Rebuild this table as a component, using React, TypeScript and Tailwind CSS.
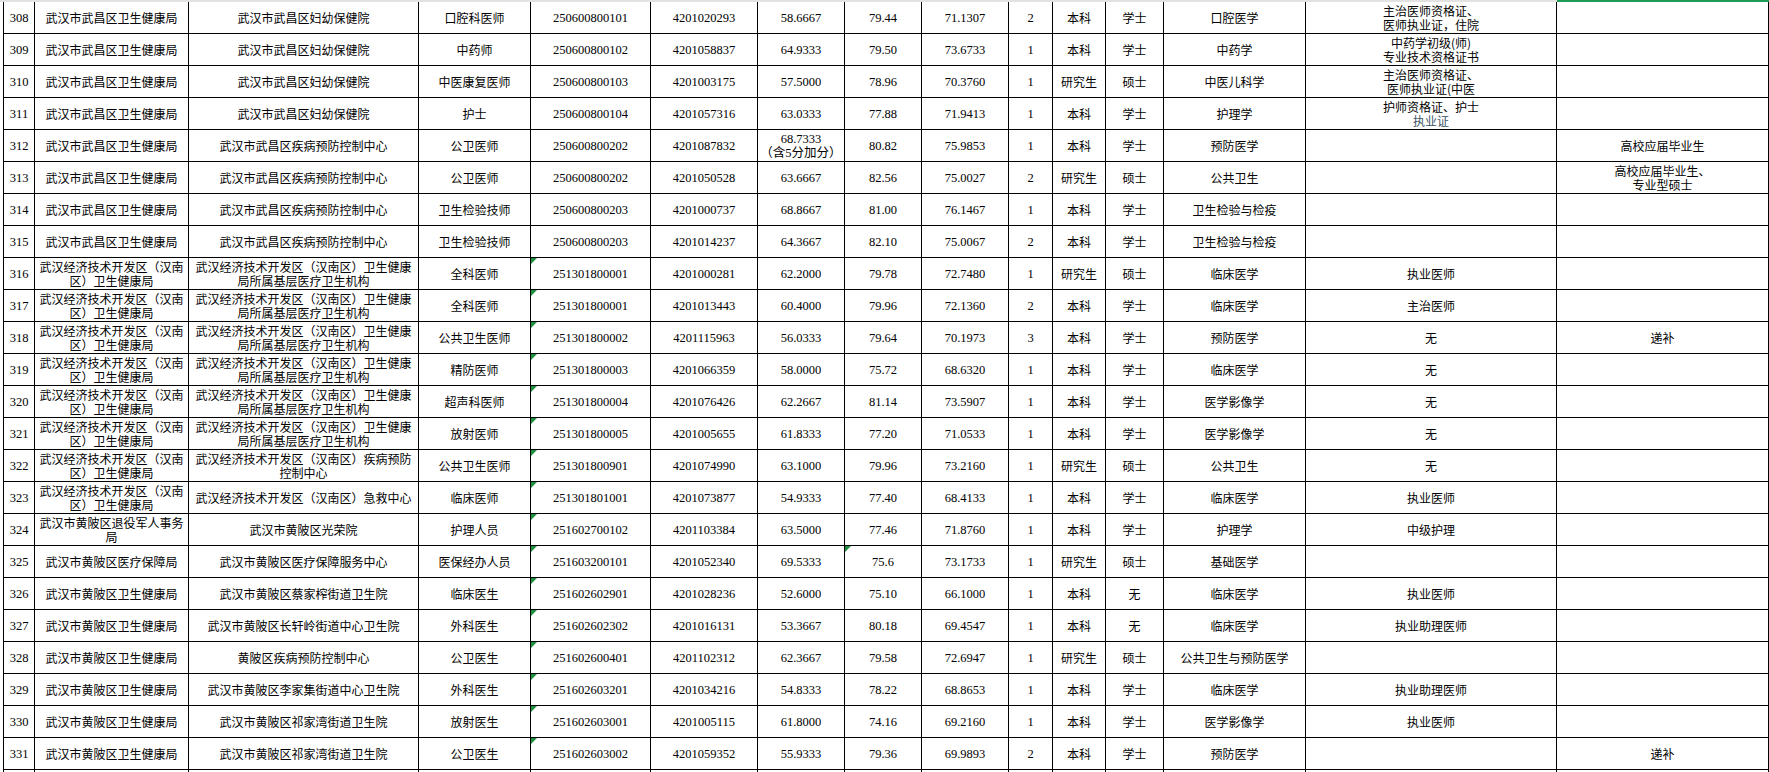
import type { ReactNode } from "react";
import clsx from "clsx";

const COLS =
  "grid grid-cols-[32px_154px_230px_112px_120px_107px_87px_77px_87px_44px_53px_58px_142px_251px_212px]";

const NUM_COLS = new Set([0, 4, 5, 6, 7, 8, 9]);

const WC = "武汉市武昌区卫生健康局";
const JK = "武汉经济技术开发区（汉南\n区）卫生健康局";
const JKB = "武汉经济技术开发区（汉南区）卫生健康\n局所属基层医疗卫生机构";
const HP = "武汉市黄陂区卫生健康局";

type Row = {
  cells: ReactNode[];
  marks?: number[];
};

const rows: Row[] = [
  { cells: ["308", WC, "武汉市武昌区妇幼保健院", "口腔科医师", "250600800101", "4201020293", "58.6667", "79.44", "71.1307", "2", "本科", "学士", "口腔医学", "主治医师资格证、\n医师执业证，住院", ""] },
  { cells: ["309", WC, "武汉市武昌区妇幼保健院", "中药师", "250600800102", "4201058837", "64.9333", "79.50", "73.6733", "1", "本科", "学士", "中药学", "中药学初级(师)\n专业技术资格证书", ""] },
  { cells: ["310", WC, "武汉市武昌区妇幼保健院", "中医康复医师", "250600800103", "4201003175", "57.5000", "78.96", "70.3760", "1", "研究生", "硕士", "中医儿科学", "主治医师资格证、\n医师执业证(中医", ""] },
  {
    cells: [
      "311", WC, "武汉市武昌区妇幼保健院", "护士", "250600800104", "4201057316", "63.0333", "77.88", "71.9413", "1", "本科", "学士", "护理学",
      <span key="m">
        护师资格证、护士
        <br />
        <span className="text-[#3d5566]">执业证</span>
      </span>,
      "",
    ],
  },
  { cells: ["312", WC, "武汉市武昌区疾病预防控制中心", "公卫医师", "250600800202", "4201087832", "68.7333\n（含5分加分）", "80.82", "75.9853", "1", "本科", "学士", "预防医学", "", "高校应届毕业生"] },
  { cells: ["313", WC, "武汉市武昌区疾病预防控制中心", "公卫医师", "250600800202", "4201050528", "63.6667", "82.56", "75.0027", "2", "研究生", "硕士", "公共卫生", "", "高校应届毕业生、\n专业型硕士"] },
  { cells: ["314", WC, "武汉市武昌区疾病预防控制中心", "卫生检验技师", "250600800203", "4201000737", "68.8667", "81.00", "76.1467", "1", "本科", "学士", "卫生检验与检疫", "", ""] },
  { cells: ["315", WC, "武汉市武昌区疾病预防控制中心", "卫生检验技师", "250600800203", "4201014237", "64.3667", "82.10", "75.0067", "2", "本科", "学士", "卫生检验与检疫", "", ""] },
  { marks: [4], cells: ["316", JK, JKB, "全科医师", "251301800001", "4201000281", "62.2000", "79.78", "72.7480", "1", "研究生", "硕士", "临床医学", "执业医师", ""] },
  { marks: [4], cells: ["317", JK, JKB, "全科医师", "251301800001", "4201013443", "60.4000", "79.96", "72.1360", "2", "本科", "学士", "临床医学", "主治医师", ""] },
  { marks: [4], cells: ["318", JK, JKB, "公共卫生医师", "251301800002", "4201115963", "56.0333", "79.64", "70.1973", "3", "本科", "学士", "预防医学", "无", "递补"] },
  { marks: [4], cells: ["319", JK, JKB, "精防医师", "251301800003", "4201066359", "58.0000", "75.72", "68.6320", "1", "本科", "学士", "临床医学", "无", ""] },
  { marks: [4], cells: ["320", JK, JKB, "超声科医师", "251301800004", "4201076426", "62.2667", "81.14", "73.5907", "1", "本科", "学士", "医学影像学", "无", ""] },
  { marks: [4], cells: ["321", JK, JKB, "放射医师", "251301800005", "4201005655", "61.8333", "77.20", "71.0533", "1", "本科", "学士", "医学影像学", "无", ""] },
  { marks: [4], cells: ["322", JK, "武汉经济技术开发区（汉南区）疾病预防\n控制中心", "公共卫生医师", "251301800901", "4201074990", "63.1000", "79.96", "73.2160", "1", "研究生", "硕士", "公共卫生", "无", ""] },
  { marks: [4], cells: ["323", JK, "武汉经济技术开发区（汉南区）急救中心", "临床医师", "251301801001", "4201073877", "54.9333", "77.40", "68.4133", "1", "本科", "学士", "临床医学", "执业医师", ""] },
  { marks: [4], cells: ["324", "武汉市黄陂区退役军人事务\n局", "武汉市黄陂区光荣院", "护理人员", "251602700102", "4201103384", "63.5000", "77.46", "71.8760", "1", "本科", "学士", "护理学", "中级护理", ""] },
  { marks: [4, 7], cells: ["325", "武汉市黄陂区医疗保障局", "武汉市黄陂区医疗保障服务中心", "医保经办人员", "251603200101", "4201052340", "69.5333", "75.6", "73.1733", "1", "研究生", "硕士", "基础医学", "", ""] },
  { marks: [4], cells: ["326", HP, "武汉市黄陂区蔡家榨街道卫生院", "临床医生", "251602602901", "4201028236", "52.6000", "75.10", "66.1000", "1", "本科", "无", "临床医学", "执业医师", ""] },
  { marks: [4], cells: ["327", HP, "武汉市黄陂区长轩岭街道中心卫生院", "外科医生", "251602602302", "4201016131", "53.3667", "80.18", "69.4547", "1", "本科", "无", "临床医学", "执业助理医师", ""] },
  { marks: [4], cells: ["328", HP, "黄陂区疾病预防控制中心", "公卫医生", "251602600401", "4201102312", "62.3667", "79.58", "72.6947", "1", "研究生", "硕士", "公共卫生与预防医学", "", ""] },
  { marks: [4], cells: ["329", HP, "武汉市黄陂区李家集街道中心卫生院", "外科医生", "251602603201", "4201034216", "54.8333", "78.22", "68.8653", "1", "本科", "学士", "临床医学", "执业助理医师", ""] },
  { marks: [4], cells: ["330", HP, "武汉市黄陂区祁家湾街道卫生院", "放射医生", "251602603001", "4201005115", "61.8000", "74.16", "69.2160", "1", "本科", "学士", "医学影像学", "执业医师", ""] },
  { marks: [4], cells: ["331", HP, "武汉市黄陂区祁家湾街道卫生院", "公卫医生", "251602603002", "4201059352", "55.9333", "79.36", "69.9893", "2", "本科", "学士", "预防医学", "", "递补"] },
];

const SheetRow = ({ row }: { row: Row }) => (
  <div className={`${COLS} h-[32px]`}>
    {row.cells.map((cell, i) => (
      <div
        key={i}
        className={clsx(
          "relative flex items-center justify-center overflow-hidden whitespace-pre-line border-b border-r border-black px-[2px] text-center leading-[14px] text-black",
          i === 0 && "border-l",
          NUM_COLS.has(i)
            ? "font-['Liberation_Serif','Noto_Sans_CJK_SC',serif] text-[12.5px] text-[#1a1a1a]"
            : "font-['Noto_Sans_CJK_SC',sans-serif] text-[12px]"
        )}
      >
        {row.marks?.includes(i) && (
          <span className="absolute left-0 top-0 h-0 w-0 border-r-[6px] border-t-[6px] border-r-transparent border-t-[#1e8e3e]" />
        )}
        {cell}
      </div>
    ))}
  </div>
);

export default function App() {
  return (
    <div className="h-[772px] w-[1769px] overflow-hidden bg-white">
      <div className="flex h-[2px]">
        <div className="w-[1557px] bg-[#e2e2e2]" />
        <div className="w-[212px] bg-[#1f9d55]" />
      </div>
      <div className="ml-[3px]">
        {rows.map((row) => (
          <SheetRow key={String(row.cells[0])} row={row} />
        ))}
        <div className={`${COLS} h-[3px]`}>
          {Array.from({ length: 15 }).map((_, i) => (
            <div key={i} className={clsx("border-r border-black", i === 0 && "border-l")} />
          ))}
        </div>
      </div>
    </div>
  );
}
